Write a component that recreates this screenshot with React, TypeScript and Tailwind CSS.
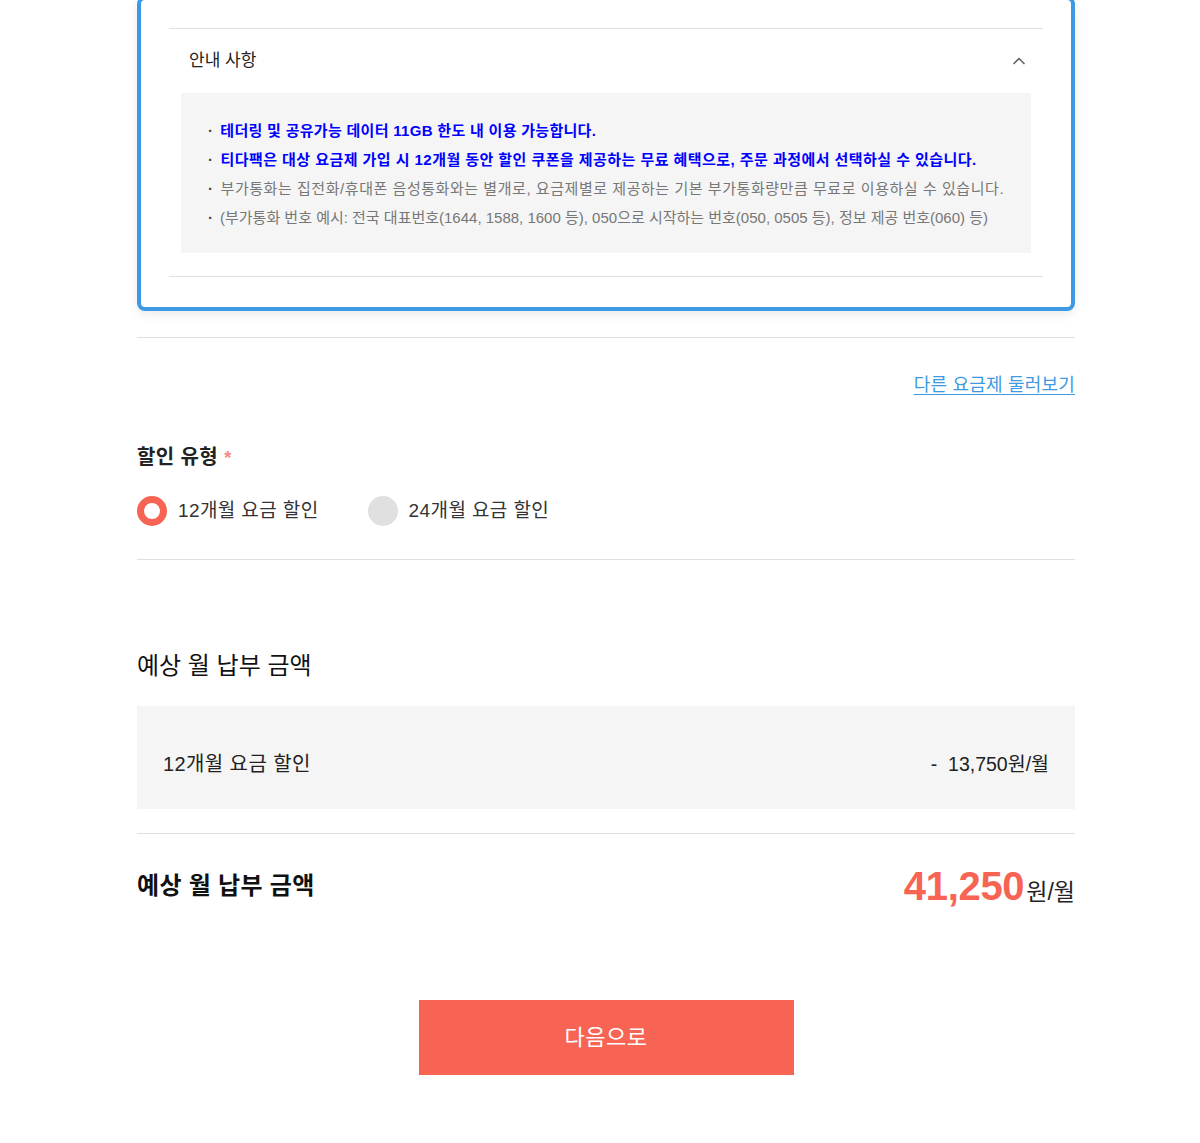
import { ChevronUp } from 'lucide-react'

const font = { fontFamily: '"Liberation Sans", "Noto Sans CJK KR", sans-serif' }

const notices = [
  { text: '테더링 및 공유가능 데이터 11GB 한도 내 이용 가능합니다.', cls: 'font-bold text-[#0000ff] tracking-[0.3px]' },
  { text: '티다팩은 대상 요금제 가입 시 12개월 동안 할인 쿠폰을 제공하는 무료 혜택으로, 주문 과정에서 선택하실 수 있습니다.', cls: 'font-bold text-[#0000ff] tracking-[0.45px]' },
  { text: '부가통화는 집전화/휴대폰 음성통화와는 별개로, 요금제별로 제공하는 기본 부가통화량만큼 무료로 이용하실 수 있습니다.', cls: 'text-[#777] tracking-[0.55px]' },
  { text: '(부가통화 번호 예시: 전국 대표번호(1644, 1588, 1600 등), 050으로 시작하는 번호(050, 0505 등), 정보 제공 번호(060) 등)', cls: 'text-[#777] tracking-[0px]' },
]

function Radio({ label, checked }: { label: string; checked?: boolean }) {
  return (
    <label className="flex items-center gap-[11px] cursor-pointer">
      <span
        className={
          checked
            ? 'w-[30px] h-[30px] rounded-full border-[7px] border-[#f86454] bg-white'
            : 'w-[30px] h-[30px] rounded-full bg-[#e0e0e0]'
        }
      />
      <span className="text-[19px] text-[#333] leading-[30px] tracking-[0.4px]">{label}</span>
    </label>
  )
}

export default function App() {
  return (
    <div className="bg-white min-h-[1143px] overflow-hidden" style={font}>
      <div className="ml-[137px] w-[938px]">
        {/* 요금제 카드 */}
        <div className="-mt-[4px] rounded-lg border-4 border-[#3d99e4] bg-white px-7 shadow-[0_4px_10px_rgba(0,0,0,0.08)]">
          <div className="h-[28px]" />
          <div className="border-t border-[#e0e0e0]">
            <div className="flex h-[64px] items-center justify-between px-5">
              <p className="text-[17px] text-[#222]">안내 사항</p>
              <ChevronUp className="w-5 h-5 text-[#666] -mr-[6px]" strokeWidth={2} />
            </div>
            <div className="mx-3 bg-[#f5f5f5] pl-[27px] pr-4 pt-[23px] pb-[21px]">
              <ul className="text-[15px] leading-[29px]">
                {notices.map((n, i) => (
                  <li key={i} className={n.cls}>
                    <span className="text-[#444] font-bold mr-[7px]">·</span>
                    {n.text}
                  </li>
                ))}
              </ul>
            </div>
          </div>
          <div className="mt-[23px] border-t border-[#e0e0e0] h-[31px]" />
        </div>

        <div className="mt-[26px] border-t border-[#e0e0e0]" />

        <div className="flex justify-end pt-[34px]">
          <a href="#" className="text-[18px] leading-[26px] text-[#3d99e4] underline underline-offset-[3px] tracking-[0.2px]">
            다른 요금제 둘러보기
          </a>
        </div>

        {/* 할인 유형 */}
        <div className="pt-[46px] pb-[33px] border-b border-[#e0e0e0]">
          <p className="text-[20px] font-bold text-[#222] leading-[27px] tracking-[0.4px]">
            할인 유형<span className="ml-[6px] text-[18px] font-bold text-[#f48a8a] align-middle">*</span>
          </p>
          <div className="mt-[24px] flex items-center gap-[49px]">
            <Radio label="12개월 요금 할인" checked />
            <Radio label="24개월 요금 할인" />
          </div>
        </div>

        {/* 예상 월 납부 금액 */}
        <h2 className="mt-[89px] text-[24px] text-[#111] leading-[34px]">예상 월 납부 금액</h2>
        <div className="mt-[23px] h-[103px] bg-[#f5f5f5] flex items-center justify-between px-[26px] pt-[13px]">
          <span className="text-[20px] text-[#222] tracking-[0.4px]">12개월 요금 할인</span>
          <span className="text-[19.5px] text-[#222]">-&nbsp;&nbsp;13,750원/월</span>
        </div>
        <div className="mt-[24px] border-t border-[#e0e0e0]" />
        <div className="flex items-center justify-between h-[104px]">
          <span className="text-[24px] font-bold text-[#111] tracking-[0.3px]">예상 월 납부 금액</span>
          <span className="flex items-baseline">
            <span className="text-[40px] font-bold text-[#f86454] tracking-[-0.3px] leading-[48px]">41,250</span>
            <span className="ml-[2px] text-[23px] text-[#222]">원/월</span>
          </span>
        </div>

        <div className="mt-[62px] flex justify-center">
          <button className="w-[375px] h-[75px] bg-[#f86454] text-white text-[22px] tracking-[0.5px]">다음으로</button>
        </div>
      </div>
    </div>
  )
}
